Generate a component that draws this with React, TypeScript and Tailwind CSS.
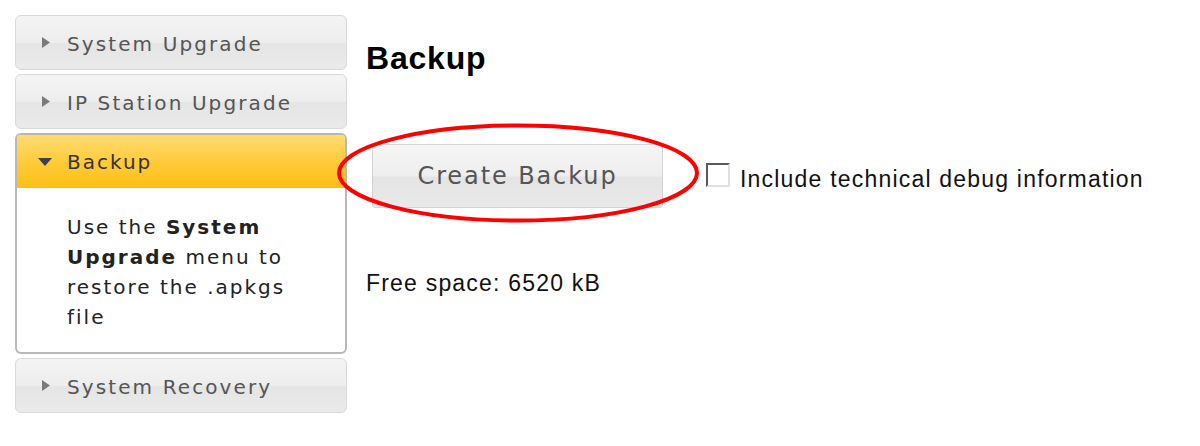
import React from "react";

const verdana = { fontFamily: '"DejaVu Sans", Verdana, sans-serif' };

function RightTri() {
  return (
    <svg width="8" height="11" viewBox="0 0 8 11" className="shrink-0">
      <polygon points="0,0 8,5.5 0,11" fill="#7a7a7a" />
    </svg>
  );
}

function DownTri() {
  return (
    <svg width="14" height="8" viewBox="0 0 14 8" className="shrink-0">
      <polygon points="0,0 14,0 7,8" fill="#3b4150" />
    </svg>
  );
}

function NavItem({ label }: { label: string }) {
  return (
    <div className="flex h-[55px] items-center rounded-[6px] border-[1.5px] border-[#d9d9d9] bg-[linear-gradient(#f4f4f4,#ededed_50%,#e5e5e5_52%,#eaeaea)] pl-[26px]">
      <RightTri />
      <span className="ml-[17px] mt-[2px] text-[20px] leading-none tracking-[2.1px] text-[#555]" style={verdana}>
        {label}
      </span>
    </div>
  );
}

export default function App() {
  return (
    <div className="relative h-[446px] w-[1200px] overflow-hidden bg-white">
      <div className="flex">
        <div className="ml-[15px] mt-[15px] flex w-[332px] flex-col gap-[4px]">
          <NavItem label="System Upgrade" />
          <NavItem label="IP Station Upgrade" />
          <div className="overflow-hidden rounded-[6px] border-2 border-[#b8b8b8] bg-white">
            <div className="flex h-[53px] items-center bg-[linear-gradient(#ffdc72,#fecb3a_50%,#fdbf14)] pl-[21px]">
              <DownTri />
              <span className="ml-[15px] text-[20px] leading-none tracking-[2px] text-[#333]" style={verdana}>
                Backup
              </span>
            </div>
            <div className="pb-[20px] pl-[50px] pt-[24px]">
              <div className="flex w-[240px] flex-col text-[20px] leading-[30px] tracking-[2px] text-[#222]" style={verdana}>
                <span>
                  Use the <b>System</b>
                </span>
                <span>
                  <b>Upgrade</b> menu to
                </span>
                <span>restore the .apkgs</span>
                <span>file</span>
              </div>
            </div>
          </div>
          <NavItem label="System Recovery" />
        </div>

        <div className="ml-[19px] pt-[42px]" style={{ fontFamily: '"Liberation Sans", Arial, sans-serif' }}>
          <h1 className="text-[32px] font-bold leading-[32px] tracking-[0.8px] text-black">Backup</h1>
          <div className="mt-[70px] flex items-center">
            <button
              className="ml-[6px] flex h-[64px] w-[291px] items-center justify-center rounded-[3px] border border-[#d4d4d4] bg-[linear-gradient(#f5f5f5,#eeeeee_50%,#e4e4e4_52%,#e9e9e9)] text-[24px] leading-none tracking-[1.9px] text-[#555]"
              style={verdana}
            >
              Create Backup
            </button>
            <div className="ml-[43px] mt-[-3px] h-[24px] w-[24px] border-2 border-b-[#e0e0e0] border-l-[#5a5a5a] border-r-[#e0e0e0] border-t-[#5a5a5a] bg-white" />
            <span className="ml-[10px] mt-[6px] text-[23px] leading-none tracking-[1.2px] text-[#111]">
              Include technical debug information
            </span>
          </div>
          <p className="mt-[64px] text-[23px] leading-[23px] tracking-[1.2px] text-[#111]">Free space: 6520 kB</p>
        </div>
      </div>

      <svg className="pointer-events-none absolute left-[335px] top-[121px] z-10" width="366" height="104" viewBox="0 0 366 104">
        <ellipse cx="183" cy="52" rx="179" ry="47.5" fill="none" stroke="#ff0000" strokeWidth="4" />
      </svg>
    </div>
  );
}
